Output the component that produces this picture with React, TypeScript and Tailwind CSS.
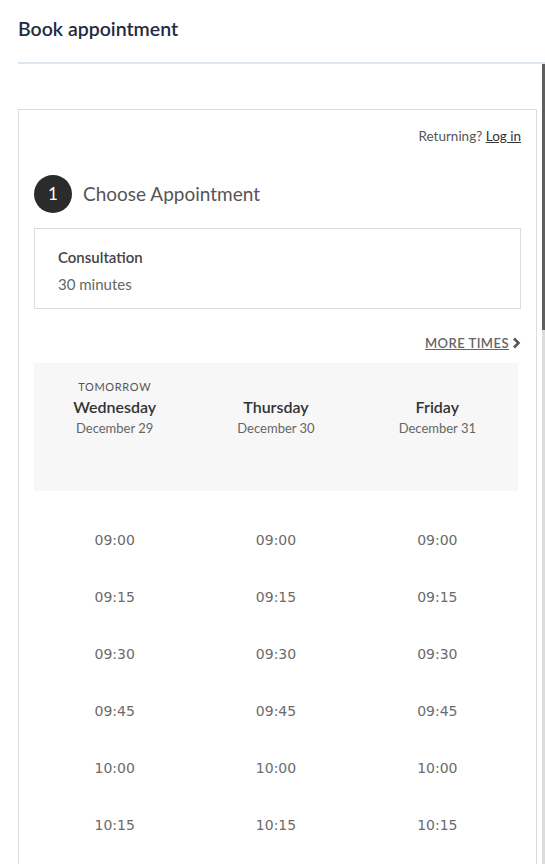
import React from 'react';

const days = [
    { tag: 'Tomorrow', name: 'Wednesday', date: 'December 29' },
    { tag: '', name: 'Thursday', date: 'December 30' },
    { tag: '', name: 'Friday', date: 'December 31' },
];

const times: string[] = [];
for (let m = 9 * 60; m <= 17 * 60 + 15; m += 15) {
    const h = String(Math.floor(m / 60)).padStart(2, '0');
    const mm = String(m % 60).padStart(2, '0');
    times.push(`${h}:${mm}`);
}

const ChevronRight = () => (
    <svg width="9" height="12" viewBox="0 0 9 12" className="ml-[3px]">
        <polyline points="2,1.5 6.5,6 2,10.5" fill="none" stroke="#555" strokeWidth="2.6" />
    </svg>
);

const App: React.FC = () => {
    return (
        <div className="h-[864px] w-[545px] overflow-hidden bg-white font-['Lato','Liberation_Sans',sans-serif]">
            {/* Header */}
            <div className="ml-[18px] h-[64px] border-b-2 border-[#dde7f1] pt-[17px]">
                <h1 className="text-[19.5px] leading-[24px] font-semibold text-[#232b42]">Book appointment</h1>
            </div>

            {/* Body with its scrollbar */}
            <div className="flex h-[800px]">
                <div className="flex-1 overflow-hidden pl-[18px] pr-[5px] pt-[45px]">
                    <div className="border border-[#dcdcdc] px-[15px] pt-[17px] pb-10">
                        <div className="text-right text-[13.5px] leading-[18px] text-[#555]">
                            Returning? <a className="underline text-[#333]">Log in</a>
                        </div>

                        <div className="mt-[30px] flex items-center gap-[11px]">
                            <div className="flex h-[38px] w-[38px] items-center justify-center rounded-full bg-[#2b2b2b] text-[17px] text-white">1</div>
                            <h2 className="text-[19px] font-normal text-[#555]">Choose Appointment</h2>
                        </div>

                        <div className="mt-[15px] border border-[#dcdcdc] px-[23px] pt-[18px] pb-[14px]">
                            <div className="text-[15px] leading-[20px] font-semibold text-[#444]">Consultation</div>
                            <div className="mt-[7px] text-[15px] leading-[20px] text-[#666]">30 minutes</div>
                        </div>

                        <div className="mt-[26px] flex justify-end">
                            <a className="flex items-center text-[13px] leading-[16px] font-semibold uppercase tracking-[0.035em] text-[#666] underline">
                                More times
                                <ChevronRight />
                            </a>
                        </div>

                        <div className="mt-3 mr-[3px] grid h-[128px] grid-cols-3 bg-[#f7f7f7] pt-[17px]">
                            {days.map((d) => (
                                <div key={d.name} className="flex flex-col items-center">
                                    <div className="h-[14px] text-[11px] leading-[14px] uppercase tracking-[0.06em] text-[#555]">{d.tag}</div>
                                    <div className="mt-[3px] text-[16px] leading-[20px] font-semibold text-[#333]">{d.name}</div>
                                    <div className="mt-[2px] text-[13px] leading-[18px] text-[#666]">{d.date}</div>
                                </div>
                            ))}
                        </div>

                        <div className="mt-[21px] mr-[3px] grid grid-cols-3 font-['DejaVu_Sans',sans-serif] text-[14px] text-[#6b6b6b]">
                            {times.map((t) => (
                                <React.Fragment key={t}>
                                    <div className="flex h-[57px] items-center justify-center">{t}</div>
                                    <div className="flex h-[57px] items-center justify-center">{t}</div>
                                    <div className="flex h-[57px] items-center justify-center">{t}</div>
                                </React.Fragment>
                            ))}
                        </div>
                    </div>
                </div>
                <div className="w-[3px] bg-[#dcdcdc]">
                    <div className="h-[266px] bg-[#5f5f5f]" />
                </div>
            </div>
        </div>
    );
};

export default App;
